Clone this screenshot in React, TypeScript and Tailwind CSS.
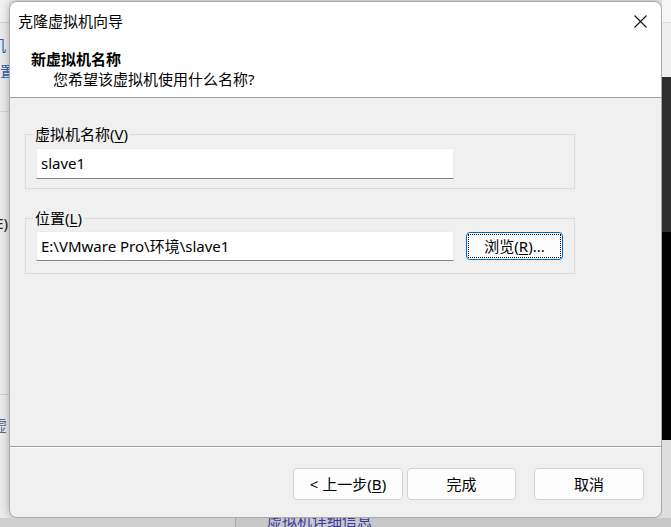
import React from "react"

const font = "font-['Noto_Sans','Noto_Sans_CJK_SC',sans-serif]"

function Mnemonic({ label, k, suffix = "" }: { label: string; k: string; suffix?: string }) {
  return (
    <span>
      {label}(<span className="underline underline-offset-2">{k}</span>){suffix}
    </span>
  )
}

function LeftStrip() {
  return (
    <div className="w-[9px] h-full bg-[#ececec] overflow-hidden flex flex-col text-[15px] leading-[20px]">
      <div className="h-[23px] border-b border-[#d6d6d6] bg-[#f3f3f3]" />
      <div className="h-[12px]" />
      <div className="flex justify-end pr-[3px] text-[#2f5fb0] whitespace-nowrap">虚拟机</div>
      <div className="h-[6px]" />
      <div className="flex justify-end -mr-[6px] text-[#2f5fb0] whitespace-nowrap">设置</div>
      <div className="h-[31px] border-b border-[#d6d6d6]" />
      <div className="h-[101px]" />
      <div className="flex justify-end pr-[1px] text-[#222] whitespace-nowrap">(E)</div>
      <div className="h-[162px] border-b border-[#d0d0d0]" />
      <div className="h-[20px]" />
      <div className="flex justify-end pr-[2px] text-[#5a6b8a] whitespace-nowrap">虚</div>
    </div>
  )
}

function RightStrip() {
  return (
    <div className="w-[9px] h-full flex flex-col">
      <div className="h-[23px] bg-[#f6f6f6] border-b border-[#dcdcdc]" />
      <div className="h-[54px] bg-[#efefef]" />
      <div className="h-[155px] bg-[#2d2d2d]" />
      <div className="h-[208px] bg-black" />
      <div className="flex-1 bg-[#dedede]" />
    </div>
  )
}

function Button({ children, focused = false, className = "" }: { children: React.ReactNode; focused?: boolean; className?: string }) {
  if (focused) {
    return (
      <div className={`rounded-[4px] border-[1.5px] border-[#0067c0] bg-[#fdfdfd] p-[1px] ${className}`}>
        <div className="h-full w-full border border-dotted border-black flex items-center justify-center text-[15px]">
          {children}
        </div>
      </div>
    )
  }
  return (
    <div className={`rounded-[4px] border border-[#d3d3d3] bg-[#fdfdfd] flex items-center justify-center text-[15px] ${className}`}>
      {children}
    </div>
  )
}

function Dialog() {
  return (
    <div className="w-[653px] h-[517px] rounded-[8px] border border-[#a9a9a9] bg-[#f0f0f0] overflow-hidden flex flex-col shadow-[0_0_10px_rgba(0,0,0,0.3)]">
      <div className="bg-white border-b border-[#a0a0a0]">
        <div className="h-[38px] flex items-center justify-between pl-[8px]">
          <span className="text-[15px] text-black">克隆虚拟机向导</span>
          <div className="w-[42px] h-full flex items-center justify-center">
            <svg width="13" height="13" viewBox="0 0 13 13">
              <path d="M0.5 0.5 L12.5 12.5 M12.5 0.5 L0.5 12.5" stroke="#111" strokeWidth="1.1" fill="none" />
            </svg>
          </div>
        </div>
        <div className="pt-[9px] pb-[8px] pl-[21px] text-[15px] leading-[20px]">
          <div className="font-bold text-black">新虚拟机名称</div>
          <div className="pl-[22px] text-black">您希望该虚拟机使用什么名称?</div>
        </div>
      </div>

      <div className="flex-1 pt-[27px] pl-[15px] text-[15px] text-black">
        <fieldset className="w-[550px] border border-[#dcdcdc] px-[10px] pb-[9px]">
          <legend className="-ml-[3px] px-[2px] h-[18px] leading-[18px]">
            <Mnemonic label="虚拟机名称" k="V" />
          </legend>
          <div className="mt-[5px] w-[418px] h-[31px] bg-white border border-[#ececec] border-b-[#838383] flex items-center pl-[4px]">
            slave1
          </div>
        </fieldset>

        <fieldset className="mt-[20px] w-[550px] border border-[#dcdcdc] px-[10px] pb-[12px]">
          <legend className="-ml-[3px] px-[2px] h-[18px] leading-[18px]">
            <Mnemonic label="位置" k="L" />
          </legend>
          <div className="mt-[4px] flex items-start gap-[12px]">
            <div className="w-[418px] h-[30px] bg-white border border-[#ececec] border-b-[#838383] flex items-center pl-[4px]">
              E:\VMware Pro\环境\slave1
            </div>
            <Button focused className="mt-[1px] w-[97px] h-[28px]">
              <Mnemonic label="浏览" k="R" suffix="..." />
            </Button>
          </div>
        </fieldset>
      </div>

      <div className="h-[71px] border-t border-[#a0a0a0] shadow-[inset_0_1px_0_#ffffff] flex items-start justify-end pt-[21px] pr-[17px] text-black">
        <Button className="w-[110px] h-[32px]">
          <span>&lt; <Mnemonic label="上一步" k="B" /></span>
        </Button>
        <Button className="ml-[4px] w-[109px] h-[32px]">完成</Button>
        <Button className="ml-[18px] w-[110px] h-[32px]">取消</Button>
      </div>
    </div>
  )
}

export default function App() {
  return (
    <div className={`w-[671px] h-[527px] overflow-hidden bg-[#c9c9c9] flex flex-col ${font}`}>
      <div className="h-[518px] flex">
        <LeftStrip />
        <div className="pt-[1px] bg-[#ececec]">
          <Dialog />
        </div>
        <RightStrip />
      </div>
      <div className="flex-1 flex bg-[#c8c8c8] overflow-hidden">
        <div className="w-[236px] border-r border-[#a8a8a8] bg-[#cfcfcf]" />
        <div className="pl-[31px] -mt-[8px] text-[15px] leading-[20px] text-[#3a3aa0] whitespace-nowrap">虚拟机详细信息</div>
      </div>
    </div>
  )
}
